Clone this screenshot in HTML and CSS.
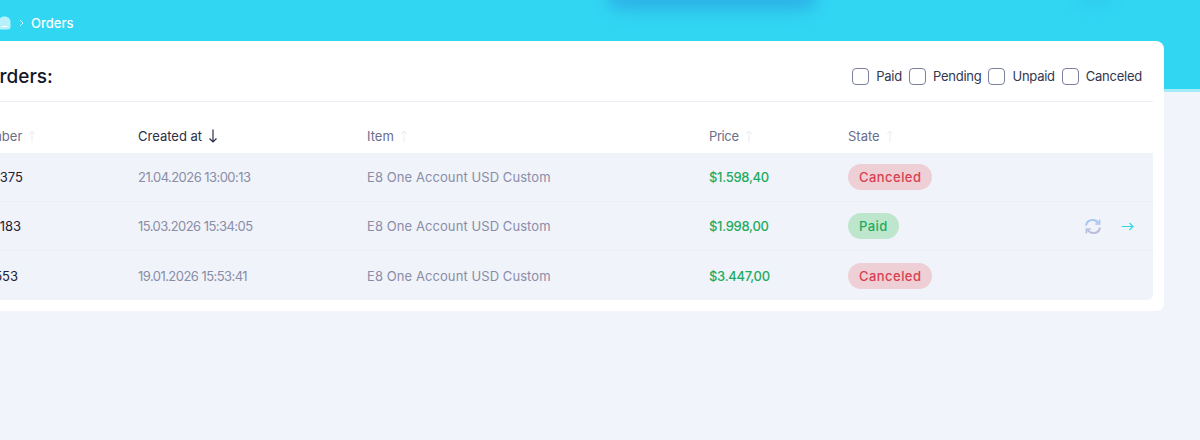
FILE: index.html
```html
<!DOCTYPE html>
<html lang="en">
<head>
    <meta charset="UTF-8">
    <meta name="viewport" content="width=device-width, initial-scale=1.0">
    <title>Orders</title>
    <link rel="stylesheet" href="styles.css">
</head>
<body>
    <header class="banner">
        <div class="glow glow-main"></div>
        <div class="glow glow-small"></div>
        <nav class="crumbs">
            <svg class="home-icon" width="15" height="14" viewBox="0 0 15 14">
                <path d="M7.5 0.5 C3.5 0.5 1.5 3 1.5 6 L1.5 10.5 C1.5 12.5 3 13.5 4.5 13.5 L10.5 13.5 C12.5 13.5 13.5 12.5 13.5 10.5 L13.5 6 C13.5 3 11.5 0.5 7.5 0.5 Z" fill="#fff" fill-opacity="0.65"/>
                <path d="M5 10.5 H10" stroke="#fff" stroke-width="1.2" stroke-linecap="round"/>
            </svg>
            <svg class="crumb-sep" width="5" height="8" viewBox="0 0 5 8">
                <path d="M1 1 L4 4 L1 7" fill="none" stroke="#fff" stroke-opacity="0.8" stroke-width="1"/>
            </svg>
            <span class="crumb-current">Orders</span>
        </nav>
    </header>

    <main class="card">
        <div class="card-head">
            <h2>Orders:</h2>
            <div class="filters">
                <label class="filter"><span class="check"></span>Paid</label>
                <label class="filter"><span class="check"></span>Pending</label>
                <label class="filter"><span class="check"></span>Unpaid</label>
                <label class="filter"><span class="check"></span>Canceled</label>
            </div>
        </div>

        <div class="table">
            <div class="row row-head">
                <div class="th">Number <svg class="sort" width="8" height="13" viewBox="0 0 8 13"><path d="M4 12.5 V1 M1 4 L4 1 L7 4" fill="none" stroke="#e8ebf3" stroke-width="1"/></svg></div>
                <div class="th th-active">Created at <svg class="sort" width="10" height="14" viewBox="0 0 10 14"><path d="M5 0.5 V13 M1.5 9.5 L5 13 L8.5 9.5" fill="none" stroke="#2c2f45" stroke-width="1.2"/></svg></div>
                <div class="th">Item <svg class="sort" width="8" height="13" viewBox="0 0 8 13"><path d="M4 12.5 V1 M1 4 L4 1 L7 4" fill="none" stroke="#e8ebf3" stroke-width="1"/></svg></div>
                <div class="th th-price">Price <svg class="sort" width="8" height="13" viewBox="0 0 8 13"><path d="M4 12.5 V1 M1 4 L4 1 L7 4" fill="none" stroke="#e8ebf3" stroke-width="1"/></svg></div>
                <div class="th">State <svg class="sort" width="8" height="13" viewBox="0 0 8 13"><path d="M4 12.5 V1 M1 4 L4 1 L7 4" fill="none" stroke="#e8ebf3" stroke-width="1"/></svg></div>
            </div>

            <div class="rows">
                <div class="row order">
                    <div class="num">1120375</div>
                    <div class="muted date">21.04.2026 13:00:13</div>
                    <div class="muted item">E8 One Account USD Custom</div>
                    <div class="price">$1.598,40</div>
                    <div><span class="badge badge-red">Canceled</span></div>
                </div>
                <div class="row order">
                    <div class="num">1120183</div>
                    <div class="muted date">15.03.2026 15:34:05</div>
                    <div class="muted item">E8 One Account USD Custom</div>
                    <div class="price">$1.998,00</div>
                    <div><span class="badge badge-green">Paid</span></div>
                    <div class="actions">
                        <svg width="18" height="17" viewBox="0 0 18 17">
                            <path d="M2 7.5 C2.6 4 5.4 2 8.6 2 C11 2 13 3 14.4 5" fill="none" stroke="#a9c6ee" stroke-width="2"/>
                            <path d="M15.6 1.6 V6 H11.2" fill="none" stroke="#a9c6ee" stroke-width="1.6"/>
                            <path d="M16 9.5 C15.4 13 12.6 15 9.4 15 C7 15 5 14 3.6 12" fill="none" stroke="#b9bedb" stroke-width="2"/>
                            <path d="M2.4 15.4 V11 H6.8" fill="none" stroke="#b9bedb" stroke-width="1.6"/>
                        </svg>
                        <svg width="13" height="9" viewBox="0 0 13 9">
                            <path d="M0.5 4.5 H12 M8.5 1 L12 4.5 L8.5 8" fill="none" stroke="#30d8e4" stroke-width="1.2"/>
                        </svg>
                    </div>
                </div>
                <div class="row order">
                    <div class="num">1111553</div>
                    <div class="muted date">19.01.2026 15:53:41</div>
                    <div class="muted item">E8 One Account USD Custom</div>
                    <div class="price">$3.447,00</div>
                    <div><span class="badge badge-red">Canceled</span></div>
                </div>
            </div>
        </div>
    </main>
</body>
</html>
```

FILE: styles.css
```css
/* General Styles */
html, body {
    height: 100%;
}

body {
    margin: 0;
    overflow: hidden;
    background-color: #f2f4fc;
    font-family: Inter, "Open Sans", sans-serif;
    font-size: 13px;
    color: #1f2233;
}

/* Top banner */
.banner {
    position: relative;
    height: 89px;
    background-color: #31d6f3;
    border-bottom: 3px solid #a5ecf8;
    overflow: hidden;
}

.glow {
    position: absolute;
    filter: blur(8px);
}

.glow-main {
    left: 606px;
    top: -22px;
    width: 212px;
    height: 32px;
    border-radius: 16px;
    background-color: #2cb2e6;
}

.glow-small {
    left: 1080px;
    top: -8px;
    width: 30px;
    height: 9px;
    border-radius: 5px;
    background-color: #2cc0ea;
}

.crumbs {
    display: flex;
    align-items: center;
    gap: 7px;
    height: 46px;
    margin-left: -3px;
    color: #fff;
}

.crumb-current {
    margin-left: 0;
    font-size: 13px;
    font-weight: 500;
}

/* Card */
.card {
    position: relative;
    width: 1204px;
    height: 270px;
    margin: -51px 0 0 -40px;
    background-color: #fff;
    border-radius: 8px;
    box-sizing: border-box;
    padding: 0 11px 11px 0;
}

.card-head {
    display: flex;
    align-items: center;
    justify-content: space-between;
    box-sizing: border-box;
    height: 61px;
    padding: 10px 11px 0 25px;
    border-bottom: 1px solid #eceef5;
}

.card-head h2 {
    margin: 0;
    font-size: 19px;
    font-weight: 500;
    color: #14172b;
}

.filters {
    display: flex;
    gap: 7px;
}

.filter {
    display: flex;
    align-items: center;
    gap: 7px;
    font-size: 13px;
    letter-spacing: -0.25px;
    color: #33364d;
}

.check {
    width: 15px;
    height: 15px;
    border: 1px solid #7d7f9e;
    border-radius: 4px;
}

/* Table */
.row {
    display: grid;
    grid-template-columns: 165px 229px 342px 139px 1fr;
    align-items: center;
    padding-left: 13px;
}

.row-head {
    height: 51px;
    padding-top: 17px;
    box-sizing: border-box;
    color: #6a6d8c;
    font-size: 13px;
}

.th {
    display: flex;
    align-items: center;
    gap: 6px;
}

.th-active {
    color: #2c2f45;
}

.th-price {
    letter-spacing: -0.4px;
}

.rows {
    background-color: #f0f3fa;
    border-radius: 0 0 6px 6px;
}

.order {
    position: relative;
    box-sizing: border-box;
    height: 49px;
    border-bottom: 1px solid #ebeef6;
}

.order:last-child {
    border-bottom: none;
}

.num {
    color: #1f2233;
}

.muted {
    color: #8a8da6;
}

.date {
    letter-spacing: -0.55px;
}

.item {
    letter-spacing: 0.08px;
}

.price {
    color: #1fab5e;
    font-weight: 500;
    letter-spacing: -0.3px;
}

.badge {
    display: inline-block;
    padding: 0 11px;
    line-height: 26px;
    border-radius: 13px;
    font-weight: 500;
    letter-spacing: 0.45px;
}

.badge-red {
    background-color: #eecfd6;
    color: #d8404f;
}

.badge-green {
    background-color: #bde6cd;
    color: #1fab5e;
}

.actions {
    position: absolute;
    top: 16px;
    right: 19px;
    display: flex;
    align-items: center;
    gap: 19px;
}
```
